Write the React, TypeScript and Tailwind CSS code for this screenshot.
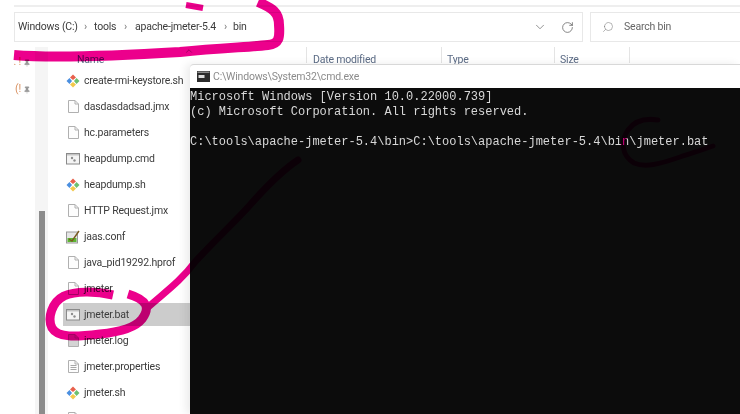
import React from 'react'
import { ChevronDown, RotateCw, Search, Pin, ChevronUp } from 'lucide-react'

type FileKind = 'git' | 'blank' | 'cmd' | 'conf' | 'log' | 'props'

const files: { name: string; kind: FileKind; selected?: boolean }[] = [
  { name: 'create-rmi-keystore.sh', kind: 'git' },
  { name: 'dasdasdadsad.jmx', kind: 'blank' },
  { name: 'hc.parameters', kind: 'blank' },
  { name: 'heapdump.cmd', kind: 'cmd' },
  { name: 'heapdump.sh', kind: 'git' },
  { name: 'HTTP Request.jmx', kind: 'blank' },
  { name: 'jaas.conf', kind: 'conf' },
  { name: 'java_pid19292.hprof', kind: 'blank' },
  { name: 'jmeter', kind: 'blank' },
  { name: 'jmeter.bat', kind: 'cmd', selected: true },
  { name: 'jmeter.log', kind: 'log' },
  { name: 'jmeter.properties', kind: 'props' },
  { name: 'jmeter.sh', kind: 'git' },
  { name: '', kind: 'blank' },
]

const FileIcon = ({ kind }: { kind: FileKind }) => {
  if (kind === 'git') {
    return (
      <svg width="14" height="14" viewBox="0 0 14 14" className="shrink-0">
        <path d="M7 0.5 L10 3.5 L7 6 L4 3.5 Z" fill="#e8604c" />
        <path d="M3.5 4 L6 7 L3.5 10 L0.5 7 Z" fill="#4a8fe0" />
        <path d="M10.5 4 L13.5 7 L10.5 10 L8 7 Z" fill="#6cc070" />
        <path d="M7 8 L10 10.5 L7 13.5 L4 10.5 Z" fill="#f2c94c" />
      </svg>
    )
  }
  if (kind === 'cmd') {
    return (
      <svg width="14" height="12" viewBox="0 0 14 12" className="shrink-0">
        <rect x="0.5" y="0.5" width="13" height="10.5" fill="#f4f4f4" stroke="#8a8a8a" />
        <rect x="1" y="1" width="12" height="1.5" fill="#c4c4c4" />
        <circle cx="6" cy="5" r="1.2" fill="#8d8d8d" />
        <circle cx="8.5" cy="7.5" r="1.2" fill="#8d8d8d" />
      </svg>
    )
  }
  if (kind === 'conf') {
    return (
      <svg width="14" height="14" viewBox="0 0 14 14" className="shrink-0">
        <rect x="0.5" y="2" width="11" height="11" fill="#e6e6e6" stroke="#999999" />
        <rect x="1.5" y="8" width="9" height="4" fill="#5cb531" />
        <path d="M3 9 L6 11 L13 1" fill="none" stroke="#7a5a20" strokeWidth="1.4" />
      </svg>
    )
  }
  return (
    <svg width="11" height="13" viewBox="0 0 11 13" className="shrink-0">
      <path
        d="M0.5 0.5 H7 L10.5 4 V12.5 H0.5 Z"
        fill={kind === 'log' ? '#d4d4d4' : '#fdfdfd'}
        stroke="#b0b0b0"
      />
      <path d="M7 0.5 V4 H10.5" fill="none" stroke="#b0b0b0" />
      {kind === 'props' && (
        <path d="M2.5 5.5 H8.5 M2.5 7.5 H8.5 M2.5 9.5 H8.5" stroke="#a8a8a8" />
      )}
    </svg>
  )
}

const App = () => {
  return (
    <div className="relative w-[740px] h-[414px] overflow-hidden bg-white font-['Roboto',sans-serif] text-[10.5px] tracking-[-0.2px] text-[#3c3c3c] blur-[0.4px]">
      {/* explorer chrome */}
      <div className="pt-[5px] pl-[14px]">
        <div className="h-[2px] bg-[#eeeeee]" />
        <div className="flex gap-[7px] mt-[5px] h-[30px]">
          <div className="w-[569px] flex items-center border border-[#e8e8e8] pl-[3px] whitespace-nowrap">
            <span className="w-[66px]">Windows (C:)</span>
            <span className="w-[10px] text-[#777777]">›</span>
            <span className="w-[30px]">tools</span>
            <span className="w-[11px] text-[#777777]">›</span>
            <span className="w-[89px]">apache-jmeter-5.4</span>
            <span className="w-[9px] text-[#777777]">›</span>
            <span>bin</span>
            <ChevronDown size={14} strokeWidth={1.2} className="ml-auto mr-[14px] text-[#666666]" />
            <RotateCw size={13} strokeWidth={1.3} className="mr-[8px] text-[#555555]" />
          </div>
          <div className="flex-1 flex items-center border border-[#e8e8e8] border-r-0 pl-[11px]">
            <Search size={12} strokeWidth={1.1} className="-scale-x-100 text-[#777777]" />
            <span className="ml-[10px] text-[#666666]">Search bin</span>
          </div>
        </div>
      </div>

      <div className="flex h-[372px] pt-[5px]">
        {/* pinned column */}
        <div className="w-[35px] shrink-0 text-[#888888]">
          <div className="h-[20px] flex items-end justify-end gap-[2px] pr-[4px]">
            <span className="text-[#d89060] leading-[10px]">. !</span>
            <Pin size={8} fill="#9a9a9a" strokeWidth={1} />
          </div>
          <div className="h-[27px] flex items-end justify-end gap-[2px] pr-[4px]">
            <span className="text-[#d89060] leading-[10px]">(!</span>
            <Pin size={8} fill="#9a9a9a" strokeWidth={1} />
          </div>
        </div>

        {/* scrollbar */}
        <div className="w-[13px] shrink-0 bg-[#f5f5f5] flex flex-col items-center pt-[164px]">
          <div className="w-[6px] flex-1 bg-[#8c8c8c]" />
        </div>

        {/* list */}
        <div className="flex-1 min-w-0">
          <div className="relative h-[16px] flex text-[#5b6b85] leading-[14px]">
            <span className="w-[258px] pl-[29px] pt-[6px]">Name</span>
            <span className="w-[135px] pl-[6px] pt-[6px] border-l border-[#e4e4e4]">Date modified</span>
            <span className="w-[113px] pl-[5px] pt-[6px] border-l border-[#e4e4e4]">Type</span>
            <span className="w-[75px] pl-[5px] pt-[6px] border-l border-[#e4e4e4]">Size</span>
            <span className="border-l border-[#e4e4e4]" />
            <ChevronUp size={10} strokeWidth={1.2} className="absolute left-[136px] -top-[1px] text-[#666666]" />
          </div>
          <div className="flex flex-col gap-[3px] pt-[6px]">
            {files.map((file, i) => (
              <div
                key={i}
                className={`h-[23px] shrink-0 flex items-center gap-[4px] pl-[3px] ml-[15px] ${
                  file.selected ? 'bg-[#cccccc]' : ''
                }`}
              >
                <span className="w-[14px] flex justify-center shrink-0">
                  <FileIcon kind={file.kind} />
                </span>
                <span className="whitespace-nowrap">{file.name}</span>
              </div>
            ))}
          </div>
        </div>
      </div>

      {/* cmd window */}
      <div className="absolute left-[190px] top-[64px] right-0 bottom-0 flex flex-col rounded-tl-[4px] border-t border-[#d8d8d8] bg-white shadow-[-4px_0_8px_rgba(0,0,0,0.08)]">
        <div className="h-[23px] flex items-center pl-[7px] gap-[3px] text-[#8c8c8c]">
          <svg width="13" height="11" viewBox="0 0 13 11" className="shrink-0">
            <rect width="13" height="11" fill="#2c2c2c" />
            <rect x="0.5" y="0.5" width="12" height="1.5" fill="#8a8a8a" />
            <rect x="1.5" y="4" width="6" height="3" fill="#dddddd" />
          </svg>
          <span>C:\Windows\System32\cmd.exe</span>
        </div>
        <pre className="flex-1 bg-[#0c0c0c] text-[#d8d8d8] font-['Liberation_Mono',monospace] text-[12px] tracking-normal leading-[15px] pt-[2px] whitespace-pre">
          {`Microsoft Windows [Version 10.0.22000.739]
(c) Microsoft Corporation. All rights reserved.

C:\\tools\\apache-jmeter-5.4\\bin>C:\\tools\\apache-jmeter-5.4\\bin\\jmeter.bat`}
        </pre>
      </div>

      {/* marker ink */}
      <svg
        viewBox="0 0 740 414"
        className="absolute inset-0 w-[740px] h-[414px] mix-blend-multiply pointer-events-none"
        fill="none"
        stroke="#ec008c"
        strokeLinecap="round"
        strokeLinejoin="round"
      >
        <path d="M14 55 C60 59 130 55 180 52 C220 48 250 47 268 45 C279 44 280 38 279 25 C279 12 272 8 258 2" strokeWidth="10" strokeLinecap="butt" />
        <path d="M186 5 L203 8" strokeWidth="6" strokeLinecap="butt" />
        <path d="M113 295 C95 291 75 291 64 296 C52 302 47 318 52 328 C58 338 75 337 100 334 C120 332 135 328 142 319 C150 308 148 300 128 294" strokeWidth="9" strokeLinecap="butt" />
        <path d="M146 309 C165 292 180 282 195 262 C215 240 235 222 250 205 C265 188 280 172 298 160" strokeWidth="7" />
        <path d="M658 120 C645 118 635 120 628 130 C620 142 622 156 634 163 C645 168 660 164 680 157 C695 152 705 149 713 146" strokeWidth="5" />
      </svg>
    </div>
  )
}

export default App
